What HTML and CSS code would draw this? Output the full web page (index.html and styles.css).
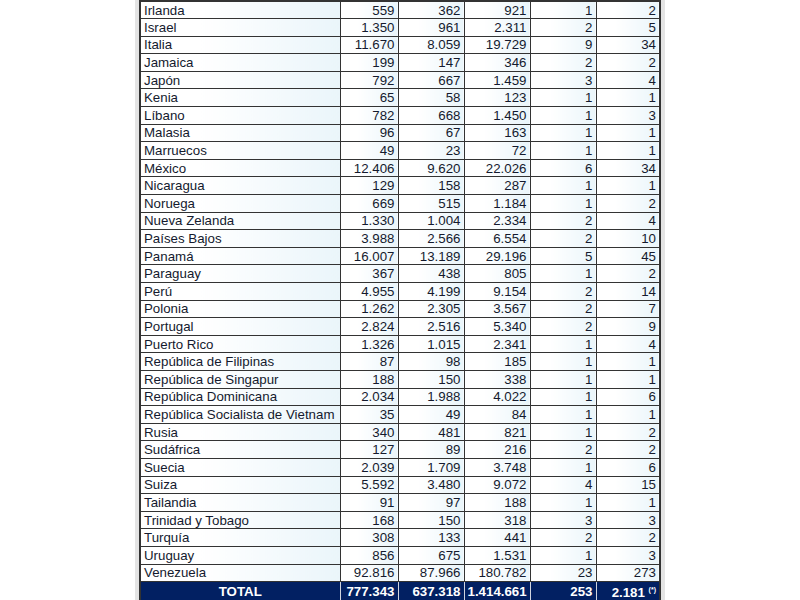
FILE: index.html
```html
<!DOCTYPE html>
<html lang="es">
<head>
  <meta charset="UTF-8">
  <title>Países</title>
  <link rel="stylesheet" href="styles.css">
</head>
<body>
  <table class="stats">
    <tbody>
      <tr><td>Irlanda</td><td>559</td><td>362</td><td>921</td><td>1</td><td>2</td></tr>
      <tr><td>Israel</td><td>1.350</td><td>961</td><td>2.311</td><td>2</td><td>5</td></tr>
      <tr><td>Italia</td><td>11.670</td><td>8.059</td><td>19.729</td><td>9</td><td>34</td></tr>
      <tr><td>Jamaica</td><td>199</td><td>147</td><td>346</td><td>2</td><td>2</td></tr>
      <tr><td>Japón</td><td>792</td><td>667</td><td>1.459</td><td>3</td><td>4</td></tr>
      <tr><td>Kenia</td><td>65</td><td>58</td><td>123</td><td>1</td><td>1</td></tr>
      <tr><td>Líbano</td><td>782</td><td>668</td><td>1.450</td><td>1</td><td>3</td></tr>
      <tr><td>Malasia</td><td>96</td><td>67</td><td>163</td><td>1</td><td>1</td></tr>
      <tr><td>Marruecos</td><td>49</td><td>23</td><td>72</td><td>1</td><td>1</td></tr>
      <tr><td>México</td><td>12.406</td><td>9.620</td><td>22.026</td><td>6</td><td>34</td></tr>
      <tr><td>Nicaragua</td><td>129</td><td>158</td><td>287</td><td>1</td><td>1</td></tr>
      <tr><td>Noruega</td><td>669</td><td>515</td><td>1.184</td><td>1</td><td>2</td></tr>
      <tr><td>Nueva Zelanda</td><td>1.330</td><td>1.004</td><td>2.334</td><td>2</td><td>4</td></tr>
      <tr><td>Países Bajos</td><td>3.988</td><td>2.566</td><td>6.554</td><td>2</td><td>10</td></tr>
      <tr><td>Panamá</td><td>16.007</td><td>13.189</td><td>29.196</td><td>5</td><td>45</td></tr>
      <tr><td>Paraguay</td><td>367</td><td>438</td><td>805</td><td>1</td><td>2</td></tr>
      <tr><td>Perú</td><td>4.955</td><td>4.199</td><td>9.154</td><td>2</td><td>14</td></tr>
      <tr><td>Polonia</td><td>1.262</td><td>2.305</td><td>3.567</td><td>2</td><td>7</td></tr>
      <tr><td>Portugal</td><td>2.824</td><td>2.516</td><td>5.340</td><td>2</td><td>9</td></tr>
      <tr><td>Puerto Rico</td><td>1.326</td><td>1.015</td><td>2.341</td><td>1</td><td>4</td></tr>
      <tr><td>República de Filipinas</td><td>87</td><td>98</td><td>185</td><td>1</td><td>1</td></tr>
      <tr><td>República de Singapur</td><td>188</td><td>150</td><td>338</td><td>1</td><td>1</td></tr>
      <tr><td>República Dominicana</td><td>2.034</td><td>1.988</td><td>4.022</td><td>1</td><td>6</td></tr>
      <tr><td>República Socialista de Vietnam</td><td>35</td><td>49</td><td>84</td><td>1</td><td>1</td></tr>
      <tr><td>Rusia</td><td>340</td><td>481</td><td>821</td><td>1</td><td>2</td></tr>
      <tr><td>Sudáfrica</td><td>127</td><td>89</td><td>216</td><td>2</td><td>2</td></tr>
      <tr><td>Suecia</td><td>2.039</td><td>1.709</td><td>3.748</td><td>1</td><td>6</td></tr>
      <tr><td>Suiza</td><td>5.592</td><td>3.480</td><td>9.072</td><td>4</td><td>15</td></tr>
      <tr><td>Tailandia</td><td>91</td><td>97</td><td>188</td><td>1</td><td>1</td></tr>
      <tr><td>Trinidad y Tobago</td><td>168</td><td>150</td><td>318</td><td>3</td><td>3</td></tr>
      <tr><td>Turquía</td><td>308</td><td>133</td><td>441</td><td>2</td><td>2</td></tr>
      <tr><td>Uruguay</td><td>856</td><td>675</td><td>1.531</td><td>1</td><td>3</td></tr>
      <tr><td>Venezuela</td><td>92.816</td><td>87.966</td><td>180.782</td><td>23</td><td>273</td></tr>
      <tr class="total"><td>TOTAL</td><td>777.343</td><td>637.318</td><td>1.414.661</td><td>253</td><td>2.181 <sup>(*)</sup></td></tr>
    </tbody>
  </table>
</body>
</html>
```

FILE: styles.css
```css
body {
  margin: 0;
  background-color: #fff;
  font-family: "Liberation Sans", Arial, sans-serif;
}

.stats {
  margin: 0 auto;
  border-collapse: collapse;
  table-layout: fixed;
  width: 520px;
  font-size: 13.3px;
  color: #141a2e;
  border: 2px solid #333;
  box-shadow: -4px 0 0 #e4e4e4, 4px 0 0 #e4e4e4;
}

.stats td {
  height: 17.6px;
  padding: 0 3px;
  border: 1px solid #333;
  text-align: right;
  line-height: 15px;
  box-sizing: border-box;
  white-space: nowrap;
  background: linear-gradient(to right, #ffffff 30%, #eaf5fa);
}

.stats td:nth-child(1) { width: 200px; text-align: left; }
.stats td:nth-child(2) { width: 58px; }
.stats td:nth-child(3) { width: 66px; }
.stats td:nth-child(4) { width: 66px; }
.stats td:nth-child(5) { width: 66px; }
.stats td:nth-child(6) { width: 64px; }

.stats .total td {
  background: #022062;
  color: #fff;
  font-weight: bold;
  border-color: #d0d4de;
  border-top-color: #333;
}

.stats .total td:first-child {
  text-align: center;
}

.stats sup {
  font-size: 7px;
  vertical-align: 5px;
}
```
